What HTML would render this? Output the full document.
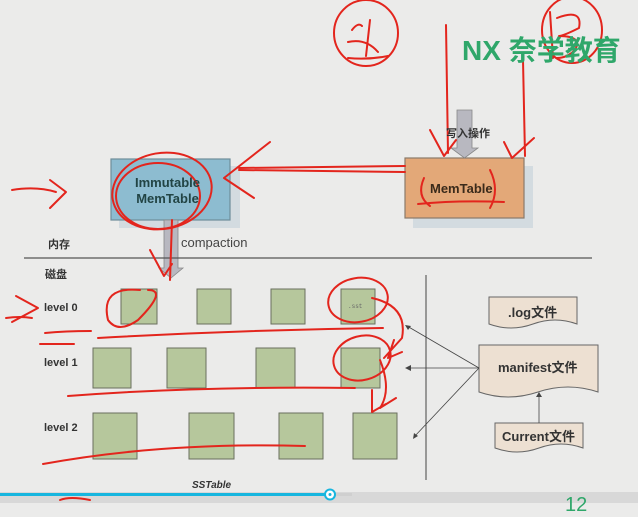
<!DOCTYPE html>
<html><head><meta charset="utf-8"><style>
body{margin:0;width:638px;height:503px;overflow:hidden;background:#ebebea;position:relative;font-family:"Liberation Sans","Noto Sans CJK SC",sans-serif}
.t{position:absolute;font-weight:bold;color:#333;white-space:nowrap}
</style></head><body>
<svg width="638" height="503" style="position:absolute;left:0;top:0">
<rect x="119" y="166" width="121" height="62" fill="#d3dbe0"/>
<rect x="413" y="166" width="120" height="62" fill="#d3dbe0"/>
<rect x="111" y="159" width="119" height="61" fill="#8dbcd0" stroke="#6f8d99" stroke-width="1.2"/>
<rect x="405" y="158" width="119" height="60" fill="#e3a878" stroke="#8a7a6a" stroke-width="1.2"/>
<path d="M457 110h15v38h6l-13.5 10l-13.5-10h6z" fill="#b8b8c0" stroke="#888" stroke-width="0.8"/>
<path d="M164 220h14v48h5l-12 10l-12-10h5z" fill="#b8b8c0" stroke="#888" stroke-width="0.8"/>
<line x1="24" y1="258" x2="592" y2="258" stroke="#555" stroke-width="1.2"/>
<line x1="426" y1="275" x2="426" y2="480" stroke="#444" stroke-width="1"/>
<g fill="#b6c79c" stroke="#6a6f5e" stroke-width="1">
<rect x="121" y="289" width="36" height="35"/><rect x="197" y="289" width="34" height="35"/><rect x="271" y="289" width="34" height="35"/><rect x="341" y="289" width="34" height="35"/>
<rect x="93" y="348" width="38" height="40"/><rect x="167" y="348" width="39" height="40"/><rect x="256" y="348" width="39" height="40"/><rect x="341" y="348" width="39" height="40"/>
<rect x="93" y="413" width="44" height="46"/><rect x="189" y="413" width="45" height="46"/><rect x="279" y="413" width="44" height="46"/><rect x="353" y="413" width="44" height="46"/>
</g>
<text x="348" y="308" font-size="6" fill="#666" font-family="Liberation Mono">.sst</text>
<g fill="#ede0d2" stroke="#666" stroke-width="1">
<path d="M489 297h88v27q-22 -8 -44 0t-44 0z"/>
<path d="M479 345h119v47q-30 -10 -60 0t-59 0z"/>
<path d="M495 423h88v25q-22 -8 -44 0t-44 0z"/>
</g>
<g stroke="#444" stroke-width="0.8" fill="none">
<line x1="479" y1="368" x2="407" y2="326"/><line x1="479" y1="368" x2="407" y2="368"/><line x1="479" y1="368" x2="414" y2="437"/><line x1="539" y1="423" x2="539" y2="394"/>
</g>
<g fill="#444"><path d="M405 325l6 1l-3 4z"/><path d="M405 368l6-3v6z"/><path d="M413 439l1-6l4 3z"/><path d="M539 392l-3 5h6z"/></g>
<rect x="0" y="492" width="638" height="11" fill="#d8d8d8"/>
<rect x="0" y="493" width="352" height="3" fill="#cfcfcf"/>
<rect x="0" y="493" width="330" height="3" fill="#17b6df"/>
<circle cx="330" cy="494.5" r="5" fill="#fff" stroke="#17b6df" stroke-width="2"/>
<circle cx="330" cy="494.5" r="1.5" fill="#17b6df"/>
<g fill="none" stroke="#e3251d" stroke-width="2" stroke-linecap="round" stroke-linejoin="round">
<ellipse cx="366" cy="33" rx="32" ry="33"/>
<path d="M352 30q6-8 10 -4M348 42q18-4 30 10M370 20l-4 36M348 58q20 2 40-2"/>
<ellipse cx="572" cy="30" rx="30" ry="33"/>
<path d="M550 12l3 46M557 18q26-10 22 10q-16 8-20 8q24 0 16 14q-8 8-18 8"/>
<path d="M446 25l2 128M430 130l14 26l12-16"/>
<path d="M523 60l2 96M504 142l8 16l22-20"/>
<path d="M405 166l-166 2M405 172l-166-2M270 142l-46 36l30 20"/>
<ellipse cx="162" cy="191" rx="50" ry="38" transform="rotate(-10 162 191)"/>
<ellipse cx="158" cy="196" rx="42" ry="33"/>
<path d="M12 190q24-4 44 2M50 180l16 12l-16 16"/>
<path d="M424 178q-8 18 6 28M490 170q10 20 0 38M418 204q40 -4 86 -2"/>
<path d="M172 220l-2 60M150 250l14 26l8-12"/>
<path d="M6 318q14-2 26 0M16 296l22 12l-26 14M45 333q20-2 46-2M40 344q14 0 34 0"/>
<path d="M140 290q-40-4-32 30q10 14 30 0q30-30 10-30"/>
<path d="M98 338q140-8 285-10"/>
<ellipse cx="358" cy="300" rx="30" ry="22" transform="rotate(-10 358 300)"/>
<path d="M372 298q36 8 30 40l-18 20M394 340l-6 18l14-6"/>
<ellipse cx="362" cy="358" rx="29" ry="22" transform="rotate(-15 362 358)"/>
<path d="M68 396q130-10 287-8M380 360q12 30 0 48l16-10M372 390l0 22l14-8"/>
<path d="M43 464q120-22 262-18"/>
<path d="M60 500q10-4 30 0"/>
</g>
</svg>
<div class="t" style="left:462px;top:29px;font-size:28px;color:#2fa76a;letter-spacing:0px">NX <span style="font-weight:bold">奈学教育</span></div>
<div class="t" style="left:446px;top:125px;font-size:11px">写入操作</div>
<div class="t" style="left:135px;top:175px;font-size:13px;color:#244;line-height:16px;text-align:center">Immutable<br>MemTable</div>
<div class="t" style="left:430px;top:181px;font-size:13px;color:#3a2a1a">MemTable</div>
<div class="t" style="left:48px;top:236px;font-size:11px">内存</div>
<div class="t" style="left:181px;top:235px;font-size:13px;font-weight:normal;color:#444">compaction</div>
<div class="t" style="left:45px;top:266px;font-size:11px">磁盘</div>
<div class="t" style="left:44px;top:302px;font-size:11px">level 0</div>
<div class="t" style="left:44px;top:357px;font-size:11px">level 1</div>
<div class="t" style="left:44px;top:422px;font-size:11px">level 2</div>
<div class="t" style="left:508px;top:302px;font-size:13px">.log文件</div>
<div class="t" style="left:498px;top:357px;font-size:13px">manifest文件</div>
<div class="t" style="left:502px;top:426px;font-size:13px">Current文件</div>
<div class="t" style="left:192px;top:480px;font-size:10px;font-style:italic">SSTable</div>
<div class="t" style="left:565px;top:494px;font-size:20px;color:#2fa76a;font-weight:normal">12</div>
</body></html>
